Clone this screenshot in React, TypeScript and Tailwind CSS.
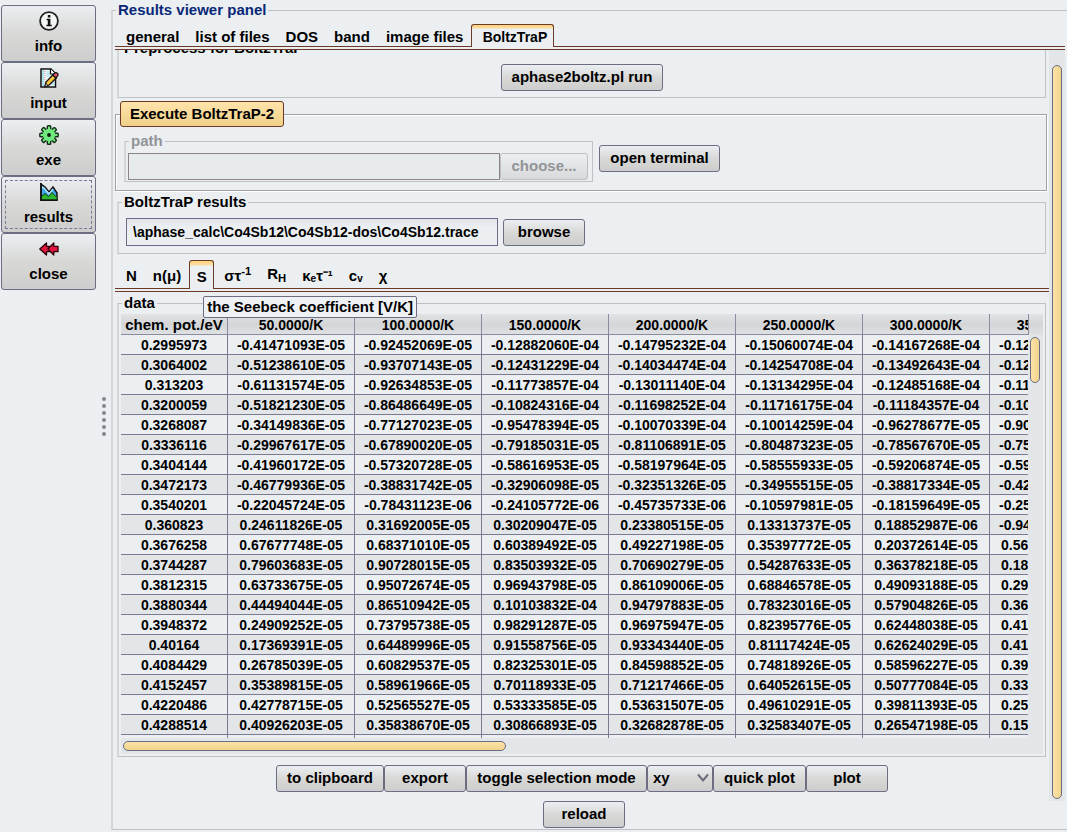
import React from 'react';

const BUTTON =
  'h-[27px] shrink-0 whitespace-nowrap rounded-[3px] border border-[#6c6c82] bg-linear-to-b from-[#ebeff2] via-[#d8d8d6] to-[#cdcdcd] text-center';
const GROUP = 'min-w-0 border border-l-2 border-[#bfc1c5] border-l-[#d4d6d8]';
const LEGEND = 'ml-[3px] px-0.5 leading-4';

const COLUMNS = ['50.0000/K', '100.0000/K', '150.0000/K', '200.0000/K', '250.0000/K', '300.0000/K', '350.0000/K'];

const ROWS = [
  ['0.2995973', '-0.41471093E-05', '-0.92452069E-05', '-0.12882060E-04', '-0.14795232E-04', '-0.15060074E-04', '-0.14167268E-04', '-0.12'],
  ['0.3064002', '-0.51238610E-05', '-0.93707143E-05', '-0.12431229E-04', '-0.14034474E-04', '-0.14254708E-04', '-0.13492643E-04', '-0.12'],
  ['0.313203', '-0.61131574E-05', '-0.92634853E-05', '-0.11773857E-04', '-0.13011140E-04', '-0.13134295E-04', '-0.12485168E-04', '-0.11'],
  ['0.3200059', '-0.51821230E-05', '-0.86486649E-05', '-0.10824316E-04', '-0.11698252E-04', '-0.11716175E-04', '-0.11184357E-04', '-0.10'],
  ['0.3268087', '-0.34149836E-05', '-0.77127023E-05', '-0.95478394E-05', '-0.10070339E-04', '-0.10014259E-04', '-0.96278677E-05', '-0.90'],
  ['0.3336116', '-0.29967617E-05', '-0.67890020E-05', '-0.79185031E-05', '-0.81106891E-05', '-0.80487323E-05', '-0.78567670E-05', '-0.75'],
  ['0.3404144', '-0.41960172E-05', '-0.57320728E-05', '-0.58616953E-05', '-0.58197964E-05', '-0.58555933E-05', '-0.59206874E-05', '-0.59'],
  ['0.3472173', '-0.46779936E-05', '-0.38831742E-05', '-0.32906098E-05', '-0.32351326E-05', '-0.34955515E-05', '-0.38817334E-05', '-0.42'],
  ['0.3540201', '-0.22045724E-05', '-0.78431123E-06', '-0.24105772E-06', '-0.45735733E-06', '-0.10597981E-05', '-0.18159649E-05', '-0.25'],
  ['0.360823', '0.24611826E-05', '0.31692005E-05', '0.30209047E-05', '0.23380515E-05', '0.13313737E-05', '0.18852987E-06', '-0.94'],
  ['0.3676258', '0.67677748E-05', '0.68371010E-05', '0.60389492E-05', '0.49227198E-05', '0.35397772E-05', '0.20372614E-05', '0.56'],
  ['0.3744287', '0.79603683E-05', '0.90728015E-05', '0.83503932E-05', '0.70690279E-05', '0.54287633E-05', '0.36378218E-05', '0.18'],
  ['0.3812315', '0.63733675E-05', '0.95072674E-05', '0.96943798E-05', '0.86109006E-05', '0.68846578E-05', '0.49093188E-05', '0.29'],
  ['0.3880344', '0.44494044E-05', '0.86510942E-05', '0.10103832E-04', '0.94797883E-05', '0.78323016E-05', '0.57904826E-05', '0.36'],
  ['0.3948372', '0.24909252E-05', '0.73795738E-05', '0.98291287E-05', '0.96975947E-05', '0.82395776E-05', '0.62448038E-05', '0.41'],
  ['0.40164', '0.17369391E-05', '0.64489996E-05', '0.91558756E-05', '0.93343440E-05', '0.81117424E-05', '0.62624029E-05', '0.41'],
  ['0.4084429', '0.26785039E-05', '0.60829537E-05', '0.82325301E-05', '0.84598852E-05', '0.74818926E-05', '0.58596227E-05', '0.39'],
  ['0.4152457', '0.35389815E-05', '0.58961966E-05', '0.70118933E-05', '0.71217466E-05', '0.64052615E-05', '0.50777084E-05', '0.33'],
  ['0.4220486', '0.42778715E-05', '0.52565527E-05', '0.53333585E-05', '0.53631507E-05', '0.49610291E-05', '0.39811393E-05', '0.25'],
  ['0.4288514', '0.40926203E-05', '0.35838670E-05', '0.30866893E-05', '0.32682878E-05', '0.32583407E-05', '0.26547198E-05', '0.15'],
];

const InfoIcon = () => (
  <svg width="20" height="20" viewBox="0 0 20 20" fill="none">
    <circle cx="10" cy="10" r="8.900" fill="#f4f5f5" stroke="#222" strokeWidth="1.800" />
    <path d="M8.800 4h2.600v2.400H8.800z M7.600 7.800h3.800v6h1.400v1.400H7.400v-1.400h1.400V9.200H7.600z" fill="#111" />
  </svg>
);

const InputIcon = () => (
  <svg width="20" height="20" viewBox="0 0 20 20">
    <path d="M2 1h10l4.500 4.500V19H2z" fill="#f2fafc" stroke="#111" strokeWidth="1.500" />
    <path d="M3 2h2.200v16H3z" fill="#a9e4ec" />
    <path d="M6 3v15" stroke="#e88" strokeWidth="1" strokeDasharray="1 1" />
    <path d="M7.500 4h4M7.500 6h4M7.500 8h3M12 14h3.500M12 16h3.500" stroke="#8fd4e2" strokeWidth="1" />
    <path d="M11.500 1v5h5" fill="#fff" stroke="#111" strokeWidth="1.200" />
    <path d="M6 18.500l1-4.500 6.800-7 3.400 3-7 7z" fill="#fbc740" stroke="#111" strokeWidth="1.300" />
    <path d="M13.800 7l2-2q1.200-.8 2.500.2t.4 2.500l-1.700 2.300z" fill="#ef5a68" stroke="#111" strokeWidth="1.200" />
    <path d="M6 18.500l.7-3.300 2.500 2.300z" fill="#fff" stroke="#111" strokeWidth=".9" />
  </svg>
);

const GearIcon = () => (
  <svg width="20" height="20" viewBox="0 0 20 20">
    {[0, 45, 90, 135].map((angle) => (
      <rect
        key={angle}
        x="8.300"
        y=".8"
        width="3.400"
        height="18.400"
        rx=".8"
        fill="#6fe87d"
        stroke="#142c18"
        strokeWidth="1.400"
        transform={`rotate(${angle} 10 10)`}
      />
    ))}
    <circle cx="10" cy="10" r="6.200" fill="#6fe87d" />
    <circle cx="10" cy="10" r="1.900" fill="#0c1c10" />
  </svg>
);

const ChartIcon = () => (
  <svg width="20" height="20" viewBox="0 0 20 20">
    <path d="M2 2l4 3 4 5 4-5 4 6v7H2z" fill="#3fa9f0" stroke="#111" strokeWidth="1.500" />
    <path d="M3 5l2.500 1.500L10 12l4-5" fill="none" stroke="#a8e0fa" strokeWidth="1.500" />
    <path d="M2.500 14.500l3.500-3 3.500 3 3.500-4 5 5V18h-15.500z" fill="#2eb82e" stroke="#0c3c0c" strokeWidth="1" />
    <path d="M2 1v17.200h16.500" fill="none" stroke="#111" strokeWidth="1.600" />
  </svg>
);

const CloseIcon = () => (
  <svg width="20" height="20" viewBox="0 0 20 20" fill="#e0163f" stroke="#2a0008" strokeWidth="1.300" strokeLinejoin="round">
    <path d="M.8 10l6.700-6v3.300h3v5.400h-3V16z" />
    <path d="M8.800 10l6-6v3.300H19v5.400h-4.200V16z" />
  </svg>
);

const NAV = [
  { label: 'info', Icon: InfoIcon },
  { label: 'input', Icon: InputIcon },
  { label: 'exe', Icon: GearIcon },
  { label: 'results', Icon: ChartIcon },
  { label: 'close', Icon: CloseIcon },
];

const Sidebar: React.FC = () => (
  <nav className="flex w-[95px] shrink-0 flex-col pt-[5px]">
    {NAV.map(({ label, Icon }) => (
      <button
        key={label}
        className={`flex h-[57px] flex-col items-center gap-[7px] rounded-[3px] border border-[#6c6c82] bg-linear-to-b from-[#ebeff2] via-[#d8d8d6] to-[#cdcdcd] pt-[5px] leading-4 ${
          label === 'results' ? 'outline-1 -outline-offset-5 outline-dashed outline-[#7a7a94]' : ''
        }`}
      >
        <Icon />
        {label}
      </button>
    ))}
  </nav>
);

const SelectedTab: React.FC<{ className: string; children: React.ReactNode }> = ({ className, children }) => (
  <button
    role="tab"
    aria-selected
    className={`relative z-10 -mb-px rounded-t-[3px] border border-b-0 border-[#6b3a26] bg-linear-to-b from-[#ffd27c] from-0% via-[#fbdc9e] via-12% to-[#ebeff2] to-20% ${className}`}
  >
    {children}
  </button>
);

const TabRule = () => <div className="h-1 border-y border-[#6b3a26]" />;

const MainTabs: React.FC = () => (
  <div role="tablist" className="flex h-7 items-stretch gap-4 pl-[11px] leading-4">
    {['general', 'list of files', 'DOS', 'band', 'image files'].map((name) => (
      <button key={name} role="tab" className="pt-[10px] whitespace-nowrap">
        {name}
      </button>
    ))}
    <SelectedTab className="-ml-2 mt-[6px] w-[83px] pt-0.5 pr-[6px] pl-[10px] text-[14px]">BoltzTraP</SelectedTab>
  </div>
);

const PropertyTabs: React.FC = () => (
  <div role="tablist" className="mt-[6px] flex h-7 items-stretch gap-4 pl-[11px] leading-4">
    <button role="tab" className="pt-1">N</button>
    <button role="tab" className="pt-1">n(μ)</button>
    <div className="relative -mr-1.5 -ml-2 flex">
      <SelectedTab className="w-[25px] pt-1">S</SelectedTab>
      <div
        role="tooltip"
        className="absolute top-9 left-[14px] z-20 rounded-xs border border-[#6c6c82] bg-[#eff2f5] px-[3px] py-0.5 whitespace-nowrap"
      >
        the Seebeck coefficient [V/K]
      </div>
    </div>
    <button role="tab" className="pt-1">
      στ<sup>-1</sup>
    </button>
    <button role="tab">
      R<sub>H</sub>
    </button>
    <button role="tab" className="pt-1">κₑτ⁻¹</button>
    <button role="tab" className="pt-1">cᵥ</button>
    <button role="tab" className="pt-1">χ</button>
  </div>
);

const DataTable: React.FC = () => (
  <table className="w-[996px] table-fixed border-separate border-spacing-0 text-center text-[14px]">
    <thead>
      <tr className="bg-linear-to-b from-[#e0e2e4] via-[#d4d5d6] to-[#dfe1e3]">
        <th className="w-[107px] border-r border-b border-[#8a8aa0] pt-0.5 text-[15px] leading-[18px]">chem. pot./eV</th>
        {COLUMNS.map((name) => (
          <th key={name} className="border-r border-b border-[#8a8aa0] pt-0.5 leading-[18px]">
            {name}
          </th>
        ))}
      </tr>
    </thead>
    <tbody>
      {ROWS.map((row) => (
        <tr key={row[0]} className="even:bg-[#e3e6e9]">
          {row.map((value, i) => (
            <td
              key={i}
              className={`border-r border-b border-[#7a7a94] pt-px leading-[18px] ${
                i < 7 ? '' : value.startsWith('-') ? 'pl-[9px] text-left' : 'pl-[11px] text-left'
              }`}
            >
              {value}
            </td>
          ))}
        </tr>
      ))}
      <tr className="h-[3px]">
        {ROWS[0].map((_, i) => (
          <td key={i} className="border-r border-[#7a7a94]" />
        ))}
      </tr>
    </tbody>
  </table>
);

const DataGroup: React.FC = () => (
  <fieldset className={`${GROUP} mt-[3px] mr-[3px] ml-0.5`}>
    <legend className={LEGEND}>data</legend>
    <div className="mx-0.5 mt-[3px] mb-0.5 bg-[#e3e6e9]">
      <div className="flex">
        <div className="min-w-0 flex-1 overflow-hidden bg-[#ebeff2]">
          <DataTable />
        </div>
        <div className="w-[15px] shrink-0">
          <div className="h-[21px] border-l border-[#8a8aa0] bg-linear-to-b from-[#e0e2e4] via-[#d4d5d6] to-[#dfe1e3]" />
          <div className="mt-0.5 ml-0.5 h-[46px] w-[10px] rounded-full border border-[#6c6c82] bg-linear-to-r from-[#fde2a8] to-[#f0d48a]" />
        </div>
      </div>
      <div className="h-4 px-0.5 pt-[3px]">
        <div className="h-[10px] w-5/12 rounded-full border border-[#6c6c82] bg-linear-to-b from-[#fde2a8] to-[#f0d48a]" />
      </div>
    </div>
  </fieldset>
);

const Actions: React.FC = () => (
  <div className="mt-2 flex justify-center">
    <button className={`${BUTTON} w-[108px]`}>to clipboard</button>
    <button className={`${BUTTON} w-[82px]`}>export</button>
    <button className={`${BUTTON} w-[181px]`}>toggle selection mode</button>
    <div className="relative">
      <select aria-label="component" className={`${BUTTON} w-[66px] appearance-none pl-[5px] text-left`}>
        <option>xy</option>
      </select>
      <svg className="pointer-events-none absolute top-2 right-1" width="12" height="10" viewBox="0 0 12 10" fill="none">
        <path d="M1 1.500l5 6 5-6" stroke="#6c6c7c" strokeWidth="2" />
      </svg>
    </div>
    <button className={`${BUTTON} w-[93px]`}>quick plot</button>
    <button className={`${BUTTON} w-[82px]`}>plot</button>
  </div>
);

export default function App() {
  return (
    <div className="flex min-h-screen bg-[#ebeff2] pl-px font-['Liberation_Sans',Arial,sans-serif] text-[15px] font-bold text-black">
      <Sidebar />
      <div className="flex w-[15px] shrink-0 flex-col items-center justify-center gap-[3px]">
        {Array.from({ length: 6 }, (_, i) => (
          <span key={i} className="size-1 rounded-full bg-[#83858f]" />
        ))}
      </div>
      <fieldset className="my-0.5 min-w-0 flex-1 border border-r-0 border-l-2 border-[#bfc1c5] border-l-[#d4d6d8] px-0.5">
        <legend className="ml-px px-0.5 leading-4 text-[#0a2878]">Results viewer panel</legend>
        <MainTabs />
        <TabRule />
        <div className="flex overflow-hidden">
          <div className="min-w-0 flex-1 pb-[9px]">
            <fieldset className={`${GROUP} -mt-[10px] mr-[3px] ml-0.5`}>
              <legend className={LEGEND}>Preprocess for BoltzTraP</legend>
              <div className="flex justify-center pt-2 pb-[6px]">
                <button className={`${BUTTON} w-[162px]`}>aphase2boltz.pl run</button>
              </div>
            </fieldset>

            <fieldset className="mt-[3px] mr-0.5 min-w-0 border border-[#a0a2a5] pb-2 shadow-[1px_1px_0_#fff,inset_1px_1px_0_#fff]">
              <legend className="ml-1">
                <button className="block h-[26px] w-[164px] rounded-[3px] border border-[#6b3a26] bg-linear-to-b from-[#ffe3aa] to-[#f0d189]">
                  Execute BoltzTraP-2
                </button>
              </legend>
              <div className="flex items-start gap-[6px] pt-[6px] pl-2">
                <fieldset className={GROUP}>
                  <legend className={`${LEGEND} text-[#929497]`}>path</legend>
                  <div className="flex pt-1 pr-1 pb-px pl-0.5">
                    <input
                      aria-label="path"
                      disabled
                      className="h-[27px] w-[372px] min-w-0 border border-[#8e8684] bg-[#e8ebed] px-1"
                    />
                    <button
                      disabled
                      className="h-[27px] w-[88px] rounded-[3px] border border-[#bcbec2] bg-linear-to-b from-[#ebeff2] to-[#d8d9da] text-[#929497]"
                    >
                      choose...
                    </button>
                  </div>
                </fieldset>
                <button className={`${BUTTON} mt-3 w-[121px]`}>open terminal</button>
              </div>
            </fieldset>

            <fieldset className={`${GROUP} mt-[3px] mr-[3px] ml-0.5`}>
              <legend className={LEGEND}>BoltzTraP results</legend>
              <div className="flex items-center gap-[5px] pt-2 pb-[7px] pl-[7px]">
                <input
                  aria-label="BoltzTraP results"
                  defaultValue="\aphase_calc\Co4Sb12\Co4Sb12-dos\Co4Sb12.trace"
                  className="h-7 w-[372px] min-w-0 border border-[#6c6c88] bg-linear-to-b from-[#e0e4e8] to-[#ebeff2] to-30% px-[6px] text-[14px]"
                />
                <button className={`${BUTTON} w-[82px]`}>browse</button>
              </div>
            </fieldset>

            <PropertyTabs />
            <TabRule />
            <DataGroup />
            <Actions />
          </div>
          <div className="-mr-0.5 w-[18px] shrink-0 pr-0.5">
            <div className="h-full bg-[#e3e6e9] pt-[15px] pb-0.5">
              <div className="mx-auto h-full w-[10px] rounded-full border border-[#6c6c82] bg-linear-to-r from-[#fde2a8] to-[#f0d48a]" />
            </div>
          </div>
        </div>
        <div className="flex justify-center pr-3 pb-px">
          <button className={`${BUTTON} w-[82px]`}>reload</button>
        </div>
      </fieldset>
    </div>
  );
}
